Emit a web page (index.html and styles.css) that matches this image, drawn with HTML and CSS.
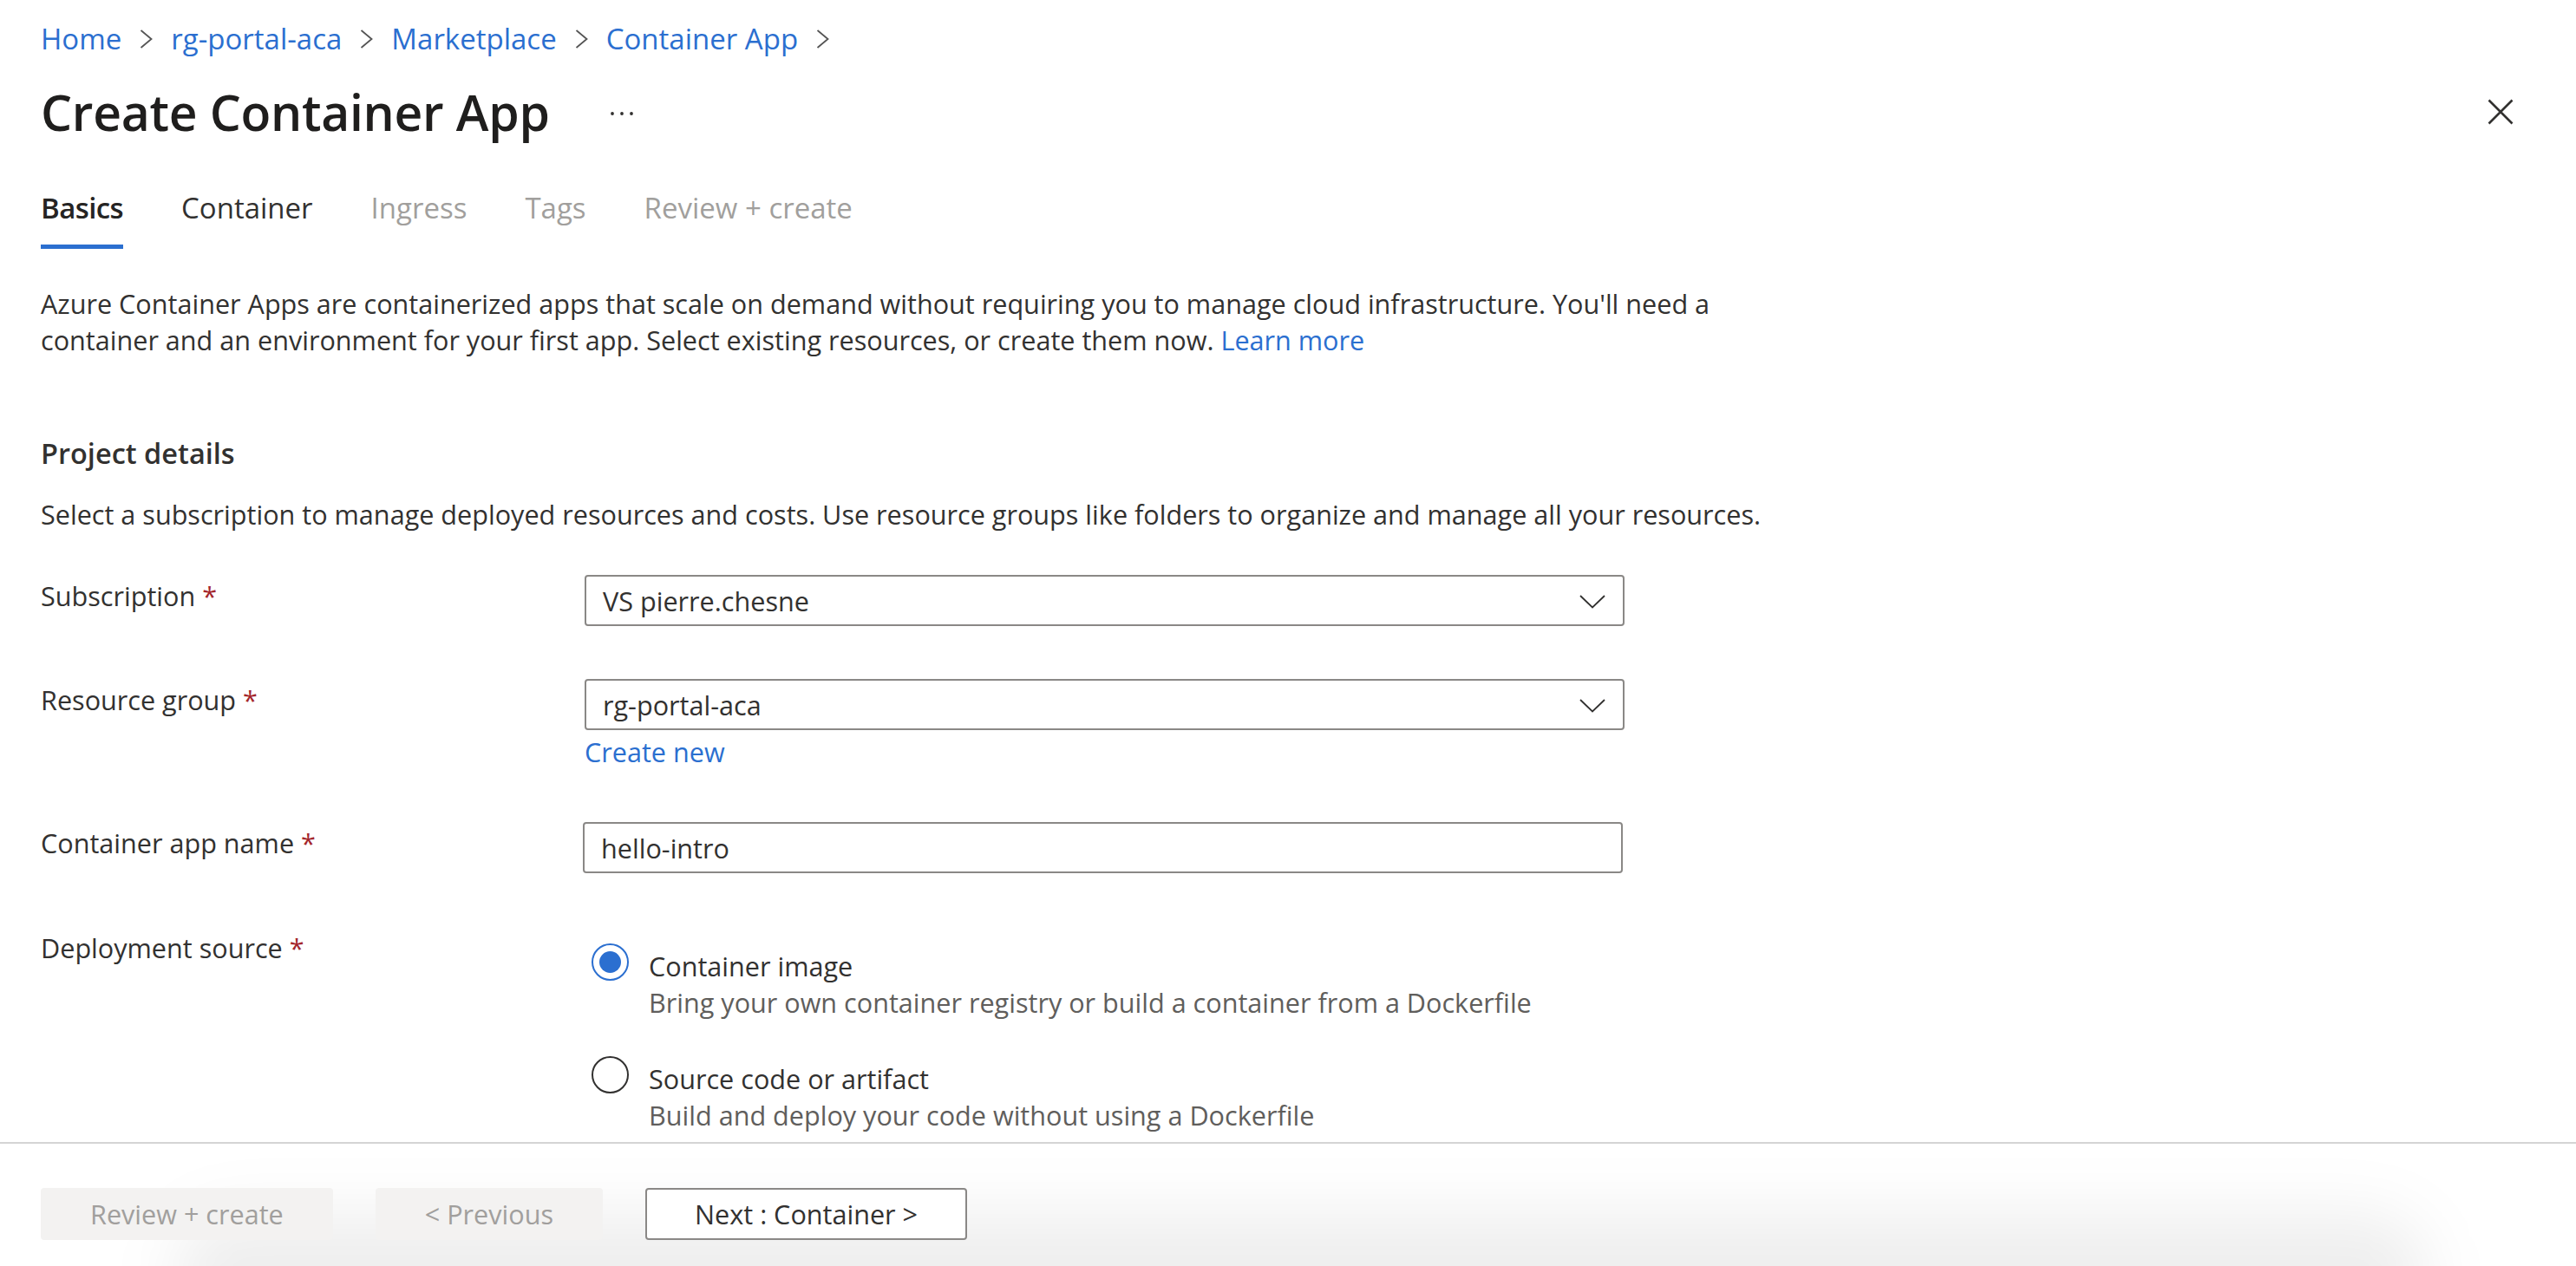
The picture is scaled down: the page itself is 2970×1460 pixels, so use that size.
FILE: index.html
```html
<!DOCTYPE html>
<html lang="en">
<head>
<meta charset="utf-8">
<title>Create Container App</title>
<link rel="stylesheet" href="styles.css">
</head>
<body>
<div class="blade">
  <header class="blade-header">
    <nav class="breadcrumb">
      <a href="#">Home</a>
      <svg class="crumb-sep" width="15" height="22" viewBox="0 0 15 22"><path d="M1.5 1 L13.5 11 L1.5 21" fill="none" stroke="#555" stroke-width="1.8"/></svg>
      <a href="#">rg-portal-aca</a>
      <svg class="crumb-sep" width="15" height="22" viewBox="0 0 15 22"><path d="M1.5 1 L13.5 11 L1.5 21" fill="none" stroke="#555" stroke-width="1.8"/></svg>
      <a href="#">Marketplace</a>
      <svg class="crumb-sep" width="15" height="22" viewBox="0 0 15 22"><path d="M1.5 1 L13.5 11 L1.5 21" fill="none" stroke="#555" stroke-width="1.8"/></svg>
      <a href="#">Container App</a>
      <svg class="crumb-sep" width="15" height="22" viewBox="0 0 15 22"><path d="M1.5 1 L13.5 11 L1.5 21" fill="none" stroke="#555" stroke-width="1.8"/></svg>
    </nav>
    <div class="title-row">
      <h1>Create Container App</h1>
      <button class="icon-btn more" aria-label="More">
        <svg width="26" height="6" viewBox="0 0 26 6"><circle cx="2" cy="3" r="1.9" fill="#323130"/><circle cx="13" cy="3" r="1.9" fill="#323130"/><circle cx="24" cy="3" r="1.9" fill="#323130"/></svg>
      </button>
      <button class="icon-btn close" aria-label="Close">
        <svg width="30" height="30" viewBox="0 0 30 30"><path d="M1.5 1.5 L28.5 28.5 M28.5 1.5 L1.5 28.5" stroke="#323130" stroke-width="2.6" fill="none"/></svg>
      </button>
    </div>
    <div class="tabs">
      <span class="tab active">Basics</span>
      <span class="tab">Container</span>
      <span class="tab disabled">Ingress</span>
      <span class="tab disabled">Tags</span>
      <span class="tab disabled">Review + create</span>
    </div>
  </header>

  <main class="blade-content">
    <p class="intro">Azure Container Apps are containerized apps that scale on demand without requiring you to manage cloud infrastructure. You'll need a container and an environment for your first app. Select existing resources, or create them now. <a href="#">Learn more</a></p>

    <h2 class="section-title">Project details</h2>
    <p class="section-desc">Select a subscription to manage deployed resources and costs. Use resource groups like folders to organize and manage all your resources.</p>

    <div class="form-row row-sub">
      <label class="field-label">Subscription <span class="req">*</span></label>
      <div class="control">
        <div class="dropdown"><span>VS pierre.chesne</span>
          <svg width="30" height="16" viewBox="0 0 30 16"><path d="M1 1 L15 14.5 L29 1" fill="none" stroke="#323130" stroke-width="1.8"/></svg>
        </div>
      </div>
    </div>

    <div class="form-row row-rg">
      <label class="field-label">Resource group <span class="req">*</span></label>
      <div class="control">
        <div class="dropdown"><span>rg-portal-aca</span>
          <svg width="30" height="16" viewBox="0 0 30 16"><path d="M1 1 L15 14.5 L29 1" fill="none" stroke="#323130" stroke-width="1.8"/></svg>
        </div>
        <a href="#" class="create-new">Create new</a>
      </div>
    </div>

    <div class="form-row row-name">
      <label class="field-label">Container app name <span class="req">*</span></label>
      <div class="control">
        <input class="textbox" type="text" value="hello-intro">
      </div>
    </div>

    <div class="form-row row-source">
      <label class="field-label">Deployment source <span class="req">*</span></label>
      <div class="control radio-group">
        <div class="radio-option">
          <span class="radio checked"></span>
          <span class="radio-label">Container image</span>
          <span class="radio-desc">Bring your own container registry or build a container from a Dockerfile</span>
        </div>
        <div class="radio-option">
          <span class="radio"></span>
          <span class="radio-label">Source code or artifact</span>
          <span class="radio-desc">Build and deploy your code without using a Dockerfile</span>
        </div>
      </div>
    </div>
  </main>

  <footer class="blade-footer">
    <button class="btn disabled">Review + create</button>
    <button class="btn disabled">&lt; Previous</button>
    <button class="btn default">Next : Container &gt;</button>
  </footer>
</div>
</body>
</html>
```

FILE: styles.css
```css
html {
  margin: 0;
  padding: 0;
  background: #ffffff;
}

body {
  margin: 0;
  padding: 0;
  font-family: "Open Sans", "Noto Sans", sans-serif;
  font-size: 30.6px;
  line-height: 42px;
  color: #323130;
}

a {
  color: #2b6fd0;
  text-decoration: none;
}

.blade {
  height: 1460px;
  display: flex;
  flex-direction: column;
  overflow: hidden;
  position: relative;
}

/* Header */
.blade-header {
  padding: 24px 72px 0 47px;
}

.breadcrumb {
  display: flex;
  align-items: center;
  gap: 21px;
  height: 42px;
  font-size: 33px;
}

.crumb-sep {
  display: block;
}

.title-row {
  display: flex;
  align-items: center;
  height: 72px;
  margin-top: 27px;
}

.title-row h1 {
  margin: 0;
  font-size: 57px;
  line-height: 72px;
  font-weight: 600;
  color: #1f1e1d;
  letter-spacing: -0.3px;
}

.icon-btn {
  background: none;
  border: 0;
  padding: 0;
  display: flex;
  align-items: center;
  justify-content: center;
  cursor: pointer;
}

.more {
  margin-left: 70px;
  margin-top: 4px;
}

.close {
  margin-left: auto;
  width: 30px;
  height: 30px;
}

.tabs {
  display: flex;
  gap: 67px;
  margin-top: 54px;
  font-size: 33px;
}

.tab {
  padding-bottom: 21px;
  border-bottom: 5px solid transparent;
  color: #323130;
}

.tab.active {
  font-weight: 600;
  letter-spacing: -0.6px;
  border-bottom-color: #2b6fd0;
  color: #252423;
}

.tab.disabled {
  color: #a19f9d;
}

/* Content */
.blade-content {
  flex: 1;
  padding: 42px 0 0 47px;
  overflow: hidden;
}

.intro {
  margin: 0;
  max-width: 2000px;
}

.section-title {
  margin: 89px 0 0;
  font-size: 32.5px;
  line-height: 42px;
  font-weight: 600;
  color: #323130;
}

.section-desc {
  margin: 28px 0 0;
}

.form-row {
  display: grid;
  grid-template-columns: 627px 1199px;
  align-items: start;
}

.row-sub { margin-top: 49px; }
.row-rg { margin-top: 61px; }
.row-name { margin-top: 60px; }
.row-source { margin-top: 62px; }

.field-label {
  padding-top: 3px;
}

.req {
  color: #a4262c;
}

.control {
  display: flex;
  flex-direction: column;
}

.dropdown {
  box-sizing: border-box;
  height: 59px;
  border: 2px solid #8a8886;
  border-radius: 4px;
  padding: 0 20px 0 19px;
  display: flex;
  align-items: center;
  justify-content: space-between;
  color: #323130;
}

.dropdown svg {
  display: block;
  margin-top: 3px;
}

.create-new {
  margin-top: 4px;
  align-self: flex-start;
}

.textbox {
  box-sizing: border-box;
  height: 59px;
  width: 1199px;
  margin-left: -2px;
  border: 2px solid #8a8886;
  border-radius: 4px;
  padding: 0 19px;
  font: inherit;
  color: #323130;
  background: #fff;
  outline: none;
}

.radio-group {
  padding-top: 24px;
  padding-left: 8px;
}

.radio-option {
  display: grid;
  grid-template-columns: 43px auto;
  column-gap: 23px;
}

.radio-option + .radio-option {
  margin-top: 46px;
}

.radio {
  grid-row: 1;
  grid-column: 1;
  box-sizing: border-box;
  width: 43px;
  height: 43px;
  margin-top: -5px;
  border: 2px solid #323130;
  border-radius: 50%;
}

.radio.checked {
  border-color: #2b6fd0;
  display: flex;
  align-items: center;
  justify-content: center;
}

.radio.checked::after {
  content: "";
  width: 25px;
  height: 25px;
  border-radius: 50%;
  background: #2b6fd0;
}

.radio-label {
  grid-row: 1;
  grid-column: 2;
}

.radio-desc {
  grid-row: 2;
  grid-column: 2;
  color: #605e5c;
}

/* Footer */
.blade-footer {
  height: 143px;
  box-sizing: border-box;
  border-top: 2px solid #d4d4d4;
  padding: 51px 47px 0;
  display: flex;
  align-items: flex-start;
  gap: 49px;
  position: relative;
}

.blade-footer::before {
  content: "";
  position: absolute;
  left: 200px;
  right: 170px;
  bottom: -80px;
  height: 140px;
  background: rgba(0, 0, 0, 0.065);
  border-radius: 70px;
  filter: blur(36px);
  z-index: -1;
  pointer-events: none;
}

.btn {
  height: 60px;
  box-sizing: border-box;
  padding: 0 55px;
  border-radius: 4px;
  font: inherit;
  line-height: 1;
  cursor: pointer;
}

.btn.disabled {
  background: #f3f2f1;
  border: 2px solid #f3f2f1;
  color: #a19f9d;
  cursor: default;
}

.btn.default {
  background: #ffffff;
  border: 2px solid #8a8886;
  color: #323130;
}
```
